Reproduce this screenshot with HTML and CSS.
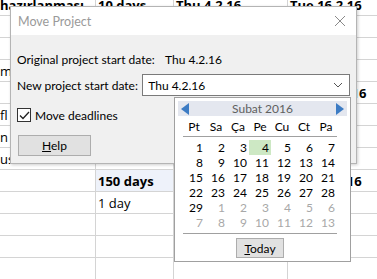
FILE: index.html
```html
<!DOCTYPE html>
<html lang="tr">
<head>
  <meta charset="UTF-8">
  <title>Move Project</title>
  <link rel="stylesheet" href="styles.css">
</head>
<body>
  <!-- Task sheet behind the dialog -->
  <table class="sheet">
    <tr class="summary"><td class="name">hazırlanması</td><td>10 days</td><td>Thu 4.2.16</td><td>Tue 16.2.16</td></tr>
    <tr><td class="name"></td><td></td><td></td><td></td></tr>
    <tr><td class="name"></td><td></td><td></td><td></td></tr>
    <tr><td class="name">m</td><td></td><td></td><td></td></tr>
    <tr class="summary"><td class="name"></td><td></td><td></td><td>Wed 24.2.16</td></tr>
    <tr><td class="name">fl</td><td></td><td></td><td></td></tr>
    <tr><td class="name">n</td><td></td><td></td><td></td></tr>
    <tr><td class="name">us</td><td></td><td></td><td></td></tr>
    <tr class="summary"><td class="name"></td><td class="sel">150 days</td><td></td><td>Tue 16.2.16</td></tr>
    <tr><td class="name"></td><td>1 day</td><td></td><td></td></tr>
    <tr><td class="name"></td><td></td><td></td><td></td></tr>
    <tr><td class="name"></td><td></td><td></td><td></td></tr>
    <tr><td class="name"></td><td></td><td></td><td></td></tr>
  </table>

  <!-- Move Project dialog -->
  <div class="dialog">
    <div class="title-bar">
      <span class="title">Move Project</span>
      <svg class="close" width="12" height="12" viewBox="0 0 12 12">
        <path d="M1 1 L11 11 M11 1 L1 11" stroke="#8a8a8a" stroke-width="1" fill="none"/>
      </svg>
    </div>
    <div class="dialog-body">
      <div class="row row-orig">
        <span class="label">Original project start date:</span>
        <span class="value">Thu 4.2.16</span>
      </div>
      <div class="row row-new">
        <span class="label label-new">New project start date:</span>
        <div class="combo">
          <span>Thu 4.2.16</span>
          <svg width="10" height="6" viewBox="0 0 10 6">
            <path d="M1 1 L5 5 L9 1" stroke="#555" stroke-width="1" fill="none"/>
          </svg>
        </div>
      </div>
      <div class="row check-row">
        <span class="checkbox">
          <svg width="11" height="9" viewBox="0 0 11 9">
            <path d="M1 4.5 L4 7.5 L10 1" stroke="#222" stroke-width="1.3" fill="none"/>
          </svg>
        </span>
        <span>Move deadlines</span>
      </div>
      <button class="btn help-btn"><u>H</u>elp</button>
    </div>
  </div>

  <!-- Date picker dropdown -->
  <div class="calendar">
    <div class="cal-head">
      <span class="arrow arrow-left"></span>
      <span class="month">Subat 2016</span>
      <span class="arrow arrow-right"></span>
    </div>
    <div class="days-head">
      <span>Pt</span><span>Sa</span><span>Ça</span><span>Pe</span><span>Cu</span><span>Ct</span><span>Pa</span>
    </div>
    <div class="days" id="days"></div>
    <div class="cal-foot">
      <button class="btn today-btn"><u>T</u>oday</button>
    </div>
  </div>

  <script>
    // Fill the month grid: February 2016 starts on Monday
    var days = document.getElementById('days');
    for (var i = 0; i < 42; i++) {
      var d = document.createElement('span');
      var n = i + 1;
      if (n > 29) {
        n = n - 29;
        d.className = 'other';
      }
      if (i === 3) d.className = 'today';
      d.textContent = n;
      days.appendChild(d);
    }
  </script>
</body>
</html>
```

FILE: styles.css
```css
body {
  margin: 0;
  width: 377px;
  height: 279px;
  overflow: hidden;
  position: relative;
  background: #fff;
  font-family: "Lato", sans-serif;
  font-size: 12px;
  color: #000;
}
.sheet {
  border-collapse: collapse;
  margin-top: -6px;
  table-layout: fixed;
  width: 420px;
  font-family: "Open Sans", sans-serif;
  font-size: 13px;
}
.sheet td {
  height: 21px;
  padding: 0 0 0 2px;
  border-bottom: 1px solid #d4d4d4;
  border-right: 1px solid #d4d4d4;
  white-space: nowrap;
  overflow: hidden;
}
.sheet td:nth-child(1) { width: 93px; }
.sheet td:nth-child(2) { width: 75px; }
.sheet td:nth-child(3) { width: 111px; }
.sheet td:nth-child(4) { width: 130px; }
.sheet .name {
  text-indent: -2px;
}
.summary td {
  font-weight: bold;
}
.sheet .sel {
  background: #eef2fa;
}
.dialog {
  position: absolute;
  left: 10px;
  top: 6px;
  width: 345px;
  height: 156px;
  background: #f0f0f0;
  border: 1px solid #b4b4b4;
  box-shadow: 1px 1px 3px rgba(0, 0, 0, 0.2);
}
.title-bar {
  height: 28px;
  background: #fff;
  display: flex;
  align-items: center;
  justify-content: space-between;
  padding: 0 10px 0 7px;
}
.title {
  color: #9a9a9a;
  font-size: 12.5px;
}
.dialog-body {
  padding: 16px 6px 0 6px;
}
.row {
  display: flex;
  align-items: center;
  white-space: nowrap;
}
.row-orig {
  height: 17px;
}
.label {
  width: 148px;
}
.label-new {
  width: 126px;
}
.row-new {
  margin-top: 6px;
  height: 22px;
}
.combo {
  width: 196px;
  height: 20px;
  background: #fff;
  border: 1px solid #7a7a7a;
  display: flex;
  align-items: center;
  justify-content: space-between;
  padding: 0 6px 0 5px;
}
.check-row {
  margin-top: 12px;
  height: 14px;
}
.checkbox {
  width: 12px;
  height: 12px;
  border: 1px solid #333;
  background: #fff;
  display: flex;
  align-items: center;
  justify-content: center;
  margin-right: 4px;
}
.btn {
  font-family: "Lato", sans-serif;
  font-size: 12px;
  background: #e1e1e1;
  border: 1px solid #adadad;
  color: #000;
  padding: 0;
}
.help-btn {
  margin: 13px 0 0 1px;
  width: 73px;
  height: 21px;
}
.calendar {
  position: absolute;
  left: 174px;
  top: 97px;
  width: 175px;
  height: 163px;
  background: #fff;
  border: 1px solid #a0a0a0;
}
.cal-head {
  margin: 3px 3px 0 3px;
  height: 15px;
  background: #e4e7ef;
  display: flex;
  align-items: center;
  justify-content: space-between;
  padding: 0 3px;
}
.month {
  color: #606060;
}
.arrow {
  width: 0;
  height: 0;
  border-top: 6px solid transparent;
  border-bottom: 6px solid transparent;
}
.arrow-left {
  border-right: 8px solid #3d7cc4;
}
.arrow-right {
  border-left: 8px solid #3d7cc4;
}
.days-head {
  display: grid;
  grid-template-columns: repeat(7, 22px);
  margin: 2px 0 0 8px;
  width: 154px;
  height: 18px;
  border-bottom: 1px solid #a0a0a0;
  line-height: 17px;
  justify-items: center;
}
.days {
  display: grid;
  grid-template-columns: repeat(7, 22px);
  grid-auto-rows: 15px;
  margin: 3px 0 0 8px;
  width: 154px;
  line-height: 15px;
  justify-items: end;
}
.days span {
  padding-right: 2px;
}
.days .other {
  color: #a8a8a8;
}
.days .today {
  background: #cde8c4;
  width: 20px;
  text-align: right;
  padding-right: 2px;
}
.cal-foot {
  margin: 3px 0 0 8px;
  width: 154px;
  border-top: 1px solid #a0a0a0;
  padding-top: 4px;
  display: flex;
  justify-content: center;
}
.today-btn {
  width: 48px;
  height: 20px;
}
```
